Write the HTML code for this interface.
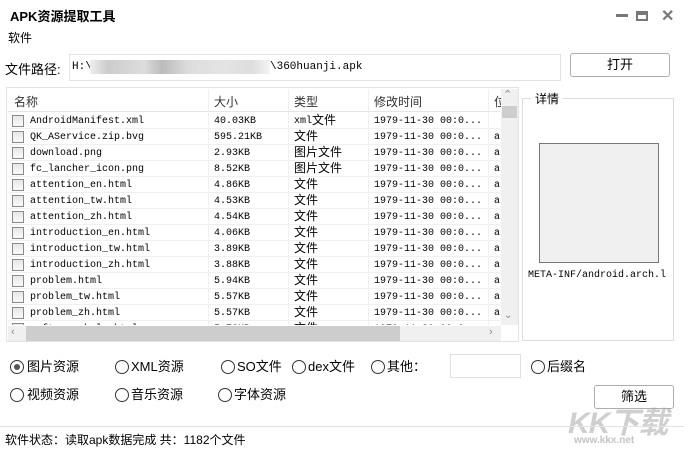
<!DOCTYPE html>
<html><head><meta charset="utf-8"><style>
*{margin:0;padding:0;box-sizing:border-box}
body{width:684px;height:449px;background:#fff;position:relative;overflow:hidden;font-family:"Liberation Sans","Noto Sans CJK SC",sans-serif;font-size:12px;color:#000}
.a{position:absolute;white-space:nowrap}
.m{font-family:"Liberation Mono","Noto Sans CJK SC",monospace;font-size:10px}
.row{position:absolute;left:0;width:492px;height:16px;border-bottom:1px solid #f0f0f0}
.row span{position:absolute;top:2px;line-height:14px;height:14px}
.row span.c{font-family:"Noto Sans CJK SC",sans-serif;font-size:12px;top:-1px;line-height:15px}
.cb{position:absolute;left:4px;top:2px;width:12px;height:12px;border:1px solid #8a8a8a;background:linear-gradient(#e8e8e8,#f8f8f8)}
.vl{position:absolute;top:0;width:1px;height:236px;background:#f0f0f0}
.rd{position:absolute;width:14px;height:14px;border:1px solid #333;border-radius:50%;background:#fff}
.rt{position:absolute;font-size:13px;line-height:14px}
.btn{position:absolute;border:1px solid #adadad;border-radius:3px;background:#fff;text-align:center;font-size:13px}
</style></head><body>
<div class="a" style="left:10px;top:6px;font-weight:bold;font-size:13px">APK资源提取工具</div>
<div class="a" style="left:616px;top:14px;width:12px;height:3px;background:#777"></div>
<div class="a" style="left:636px;top:11px;width:12px;height:10px;border:2px solid #777;border-top-width:4px"></div>
<div class="a" style="left:661px;top:6px;font-size:16px;color:#777;font-weight:bold">✕</div>
<div class="a" style="left:8px;top:29px;font-size:12px">软件</div>
<div class="a" style="left:5px;top:59px;font-size:13px">文件路径:</div>
<div class="a" style="left:69px;top:54px;width:492px;height:27px;border:1px solid #e3e3e3"></div>
<div class="a m" style="left:72px;top:61px;font-size:11px">H:\</div>
<div class="a" style="left:90px;top:60px;width:180px;height:14px;background:linear-gradient(90deg,#eee,#ccc 10%,#ddd 30%,#bbb 40%,#ddd 55%,#e4e4e4 75%,#ddd 90%,#f4f4f4)"></div>
<div class="a m" style="left:270px;top:61px;font-size:11px">\360huanji.apk</div>
<div class="btn" style="left:570px;top:53px;width:100px;height:24px;line-height:22px">打开</div>

<div class="a" style="left:6px;top:87px;width:513px;height:255px;border:1px solid #e3e3e3"></div>
<div class="a" style="left:8px;top:89px;width:492px;height:236px">
<div class="vl" style="left:200px"></div><div class="vl" style="left:280px"></div><div class="vl" style="left:360px"></div><div class="vl" style="left:480px"></div>
</div>
<div class="a" style="left:8px;top:89px;width:492px;height:23px;border-bottom:1px solid #e5e5e5;color:#333;font-size:12px">
<span class="a" style="left:6px;top:4px">名称</span><span class="a" style="left:206px;top:4px">大小</span><span class="a" style="left:286px;top:4px">类型</span><span class="a" style="left:366px;top:4px">修改时间</span><span class="a" style="left:486px;top:4px">位</span>
</div>
<div class="a" style="left:8px;top:113px;width:492px;height:212px;overflow:hidden">
<div style="position:relative;top:-113px">
<div class="row m" style="top:113px"><i class="cb"></i><span style="left:22px">AndroidManifest.xml</span><span style="left:206px">40.03KB</span><span style="left:286px">xml</span><span class="c" style="left:304px">文件</span><span style="left:366px">1979-11-30 00:0...</span></div>
<div class="row m" style="top:129px"><i class="cb"></i><span style="left:22px">QK_AService.zip.bvg</span><span style="left:206px">595.21KB</span><span class="c" style="left:286px">文件</span><span style="left:366px">1979-11-30 00:0...</span><span style="left:486px">a:</span></div>
<div class="row m" style="top:145px"><i class="cb"></i><span style="left:22px">download.png</span><span style="left:206px">2.93KB</span><span class="c" style="left:286px">图片文件</span><span style="left:366px">1979-11-30 00:0...</span><span style="left:486px">a:</span></div>
<div class="row m" style="top:161px"><i class="cb"></i><span style="left:22px">fc_lancher_icon.png</span><span style="left:206px">8.52KB</span><span class="c" style="left:286px">图片文件</span><span style="left:366px">1979-11-30 00:0...</span><span style="left:486px">a:</span></div>
<div class="row m" style="top:177px"><i class="cb"></i><span style="left:22px">attention_en.html</span><span style="left:206px">4.86KB</span><span class="c" style="left:286px">文件</span><span style="left:366px">1979-11-30 00:0...</span><span style="left:486px">a:</span></div>
<div class="row m" style="top:193px"><i class="cb"></i><span style="left:22px">attention_tw.html</span><span style="left:206px">4.53KB</span><span class="c" style="left:286px">文件</span><span style="left:366px">1979-11-30 00:0...</span><span style="left:486px">a:</span></div>
<div class="row m" style="top:209px"><i class="cb"></i><span style="left:22px">attention_zh.html</span><span style="left:206px">4.54KB</span><span class="c" style="left:286px">文件</span><span style="left:366px">1979-11-30 00:0...</span><span style="left:486px">a:</span></div>
<div class="row m" style="top:225px"><i class="cb"></i><span style="left:22px">introduction_en.html</span><span style="left:206px">4.06KB</span><span class="c" style="left:286px">文件</span><span style="left:366px">1979-11-30 00:0...</span><span style="left:486px">a:</span></div>
<div class="row m" style="top:241px"><i class="cb"></i><span style="left:22px">introduction_tw.html</span><span style="left:206px">3.89KB</span><span class="c" style="left:286px">文件</span><span style="left:366px">1979-11-30 00:0...</span><span style="left:486px">a:</span></div>
<div class="row m" style="top:257px"><i class="cb"></i><span style="left:22px">introduction_zh.html</span><span style="left:206px">3.88KB</span><span class="c" style="left:286px">文件</span><span style="left:366px">1979-11-30 00:0...</span><span style="left:486px">a:</span></div>
<div class="row m" style="top:273px"><i class="cb"></i><span style="left:22px">problem.html</span><span style="left:206px">5.94KB</span><span class="c" style="left:286px">文件</span><span style="left:366px">1979-11-30 00:0...</span><span style="left:486px">a:</span></div>
<div class="row m" style="top:289px"><i class="cb"></i><span style="left:22px">problem_tw.html</span><span style="left:206px">5.57KB</span><span class="c" style="left:286px">文件</span><span style="left:366px">1979-11-30 00:0...</span><span style="left:486px">a:</span></div>
<div class="row m" style="top:305px"><i class="cb"></i><span style="left:22px">problem_zh.html</span><span style="left:206px">5.57KB</span><span class="c" style="left:286px">文件</span><span style="left:366px">1979-11-30 00:0...</span><span style="left:486px">a:</span></div>
<div class="row m" style="top:321px"><i class="cb"></i><span style="left:22px">software_help.html</span><span style="left:206px">5.72KB</span><span class="c" style="left:286px">文件</span><span style="left:366px">1979-11-30 00:0...</span><span style="left:486px">a:</span></div>
</div></div>
<div class="a" style="left:501px;top:89px;width:17px;height:236px;background:#f0f0f0"></div>
<div class="a" style="left:503px;top:88px;font-size:11px;color:#888">⌃</div>
<div class="a" style="left:502px;top:106px;width:15px;height:12px;background:#cdcdcd"></div>
<div class="a" style="left:504px;top:310px;font-size:10px;color:#888">⌄</div>
<div class="a" style="left:8px;top:326px;width:493px;height:15px;background:#f0f0f0"></div>
<div class="a" style="left:26px;top:326px;width:374px;height:15px;background:#cdcdcd"></div>
<div class="a" style="left:11px;top:326px;font-size:11px;color:#888">‹</div>
<div class="a" style="left:489px;top:326px;font-size:11px;color:#888">›</div>
<div class="a" style="left:522px;top:98px;width:152px;height:243px;border:1px solid #dcdcdc"></div>
<div class="a" style="left:531px;top:90px;background:#fff;padding:0 4px;font-size:12px">详情</div>
<div class="a" style="left:539px;top:143px;width:120px;height:120px;border:1px solid #777;background:#f0f0f0"></div>
<div class="a m" style="left:528px;top:270px">META-INF/android.arch.l</div>
<div class="rd" style="left:10px;top:360px"><div style="position:absolute;left:3px;top:3px;width:6px;height:6px;border-radius:50%;background:#555"></div></div><div class="rt" style="left:27px;top:360px">图片资源</div>
<div class="rd" style="left:115px;top:360px"></div><div class="rt" style="left:131px;top:360px">XML资源</div>
<div class="rd" style="left:221px;top:360px"></div><div class="rt" style="left:237px;top:360px">SO文件</div>
<div class="rd" style="left:292px;top:360px"></div><div class="rt" style="left:308px;top:360px">dex文件</div>
<div class="rd" style="left:371px;top:360px"></div><div class="rt" style="left:387px;top:360px">其他：</div>
<div class="a" style="left:450px;top:354px;width:71px;height:24px;border:1px solid #e0e0e0"></div>
<div class="rd" style="left:531px;top:360px"></div><div class="rt" style="left:547px;top:360px">后缀名</div>
<div class="rd" style="left:10px;top:388px"></div><div class="rt" style="left:27px;top:388px">视频资源</div>
<div class="rd" style="left:115px;top:388px"></div><div class="rt" style="left:131px;top:388px">音乐资源</div>
<div class="rd" style="left:218px;top:388px"></div><div class="rt" style="left:234px;top:388px">字体资源</div>
<div class="btn" style="left:594px;top:385px;width:80px;height:24px;line-height:22px">筛选</div>
<div class="a" style="left:568px;top:398px;font-size:30px;font-weight:bold;color:rgba(160,160,160,0.5);font-style:italic;letter-spacing:-1px">KK下载</div>
<div class="a" style="left:574px;top:435px;font-size:10px;font-weight:bold;color:#c4c4c4">www.kkx.net</div>
<div class="a" style="left:0;top:426px;width:684px;height:1px;background:#e3e3e3"></div>
<div class="a" style="left:5px;top:431px;font-size:12px">软件状态：读取apk数据完成 共：1182个文件</div>
</body></html>
